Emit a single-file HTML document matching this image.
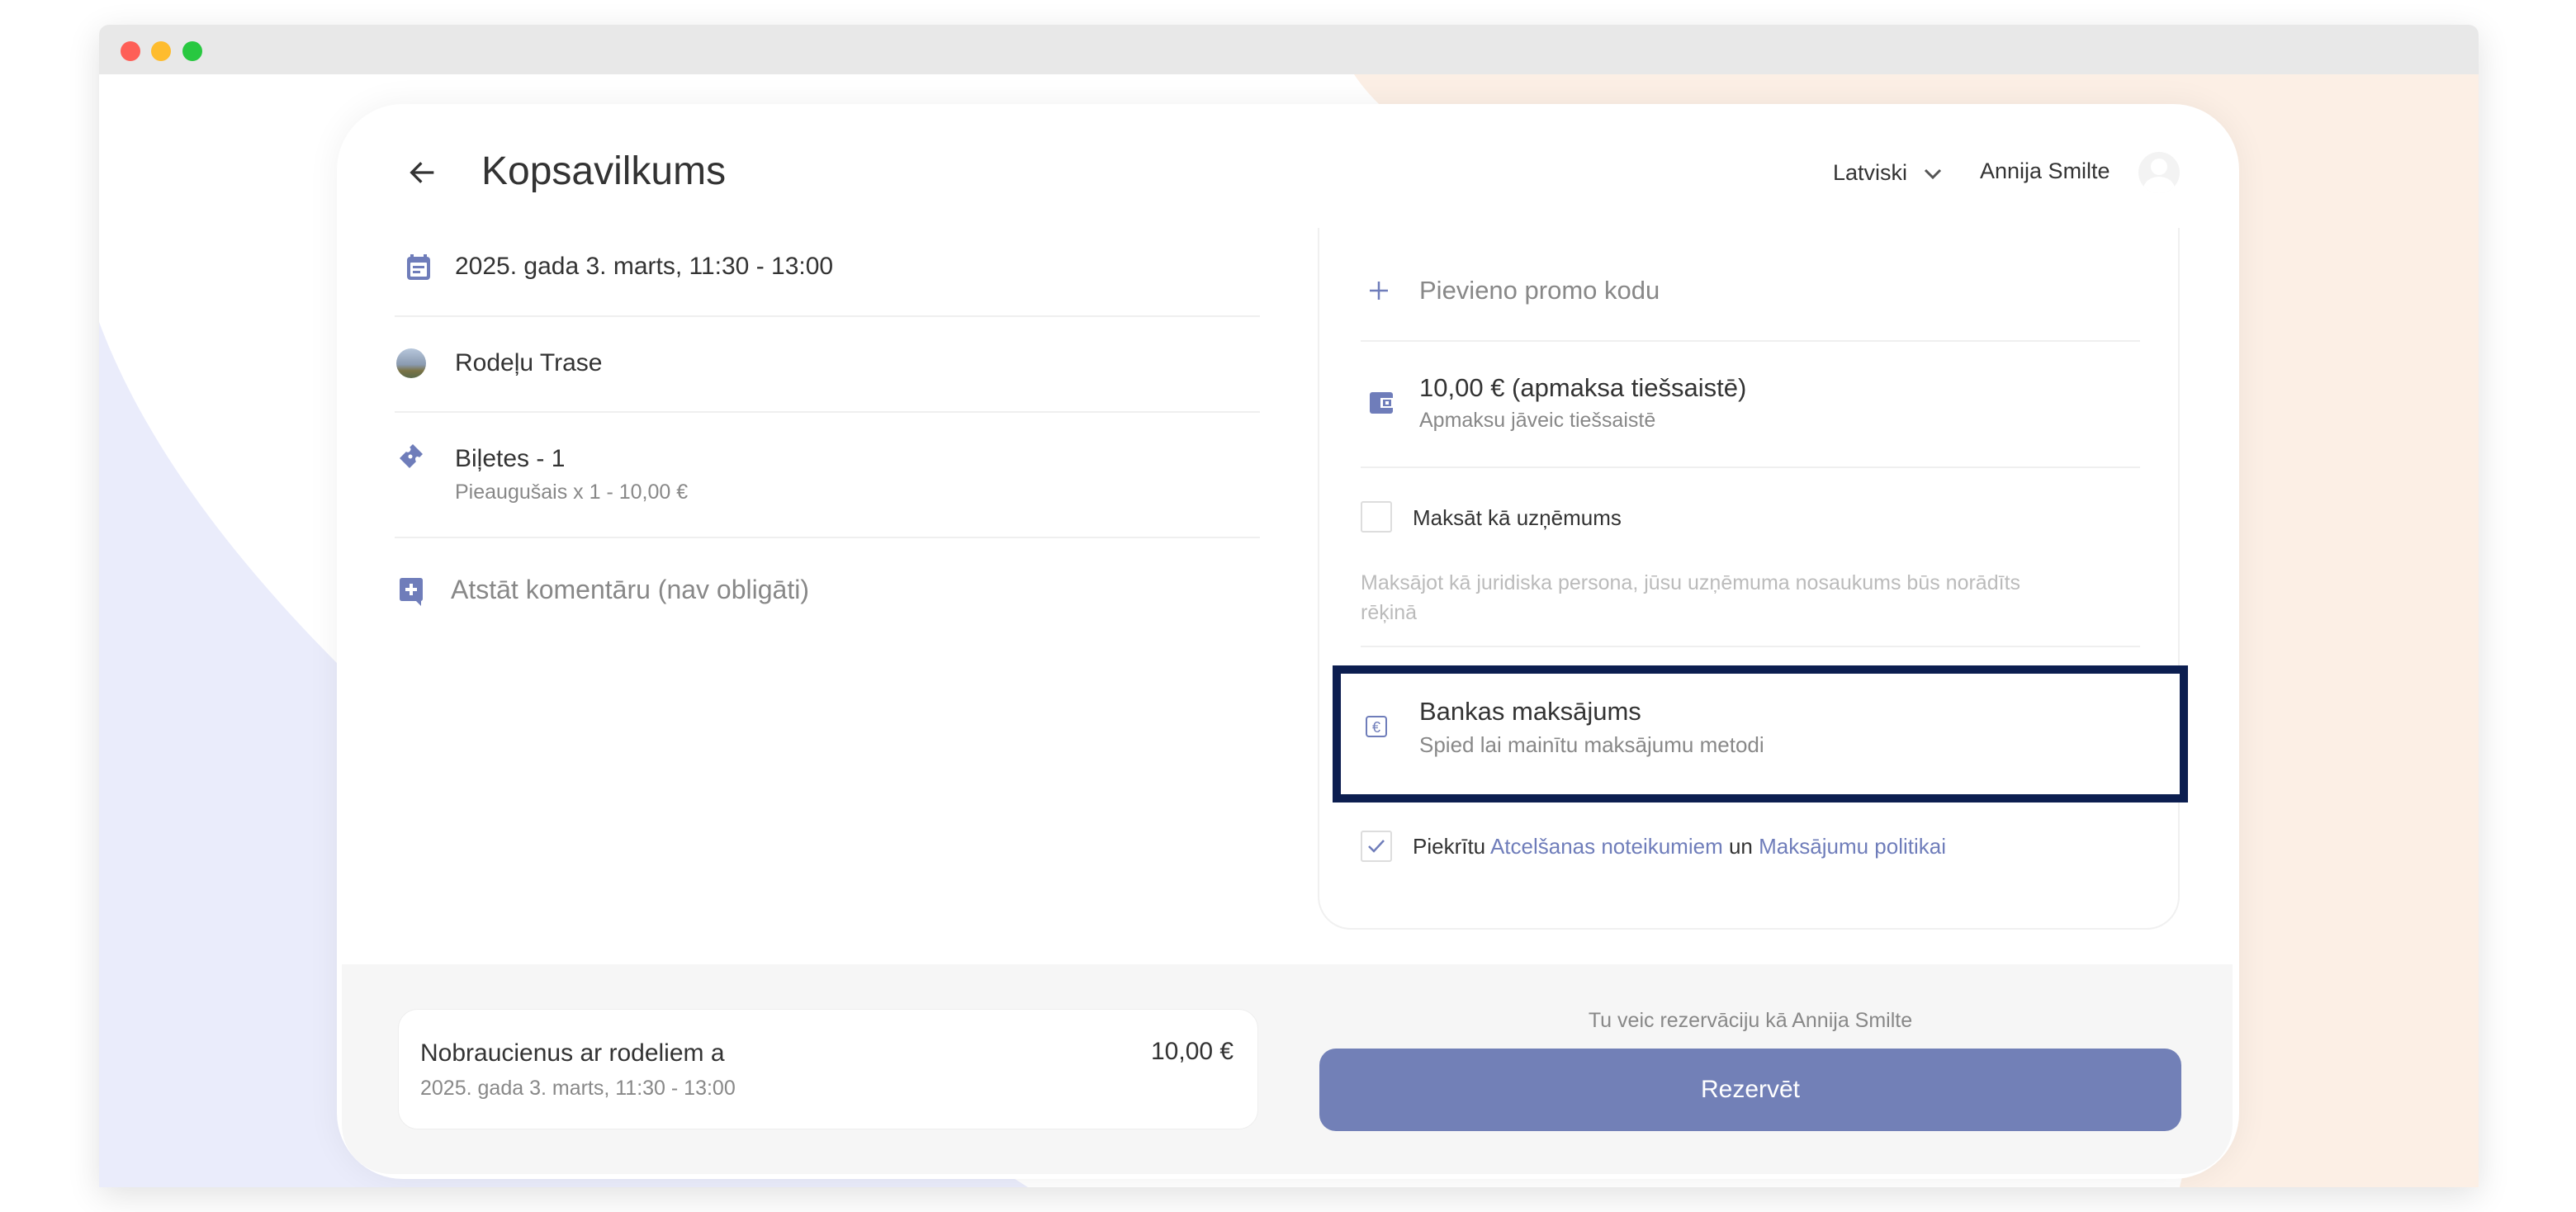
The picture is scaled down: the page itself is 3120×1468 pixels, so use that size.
<!DOCTYPE html>
<html><head><meta charset="utf-8"><style>
*{margin:0;padding:0;box-sizing:border-box}
body{width:3120px;height:1468px;background:#fff;font-family:"Liberation Sans",sans-serif;position:relative;overflow:hidden;color:#333}
.win{position:absolute;left:120px;top:30px;width:2882px;height:1408px;background:#fff;border-radius:12px 12px 0 0;box-shadow:0 10px 40px rgba(0,0,0,.12);overflow:hidden}
.tb{position:absolute;left:0;top:0;width:100%;height:60px;background:#e8e8e8}
.dot{position:absolute;top:20px;width:24px;height:24px;border-radius:50%}
.abs{position:absolute}
.card{position:absolute;left:288px;top:96px;width:2304px;height:1302px;background:#fff;border-radius:80px;box-shadow:0 0 40px rgba(0,0,0,.06);overflow:hidden}
.t{position:absolute;white-space:nowrap}
.div{position:absolute;height:2px;background:#efefef}
.ic{fill:#6f7dba}
a{color:#6f7dba;text-decoration:none}
</style></head><body>
<div class="win">
<svg class="abs" style="left:0;top:60px" width="2882" height="1348">
<path d="M0,300 C120,620 500,950 1125,1348 L0,1348 Z" fill="#eaecfb"/>
<path d="M1520,0 L2882,0 L2882,1348 L2520,1348 C2620,950 2320,560 1880,240 C1700,120 1580,90 1520,0 Z" fill="#fcefe5"/>
</svg>
<div class="tb"><div class="dot" style="left:26px;background:#fe5f57"></div><div class="dot" style="left:63px;background:#febc2e"></div><div class="dot" style="left:101px;background:#28c840"></div></div>
<div class="card">
<!-- header -->
<svg class="abs" style="left:84px;top:63px" width="40" height="40" viewBox="0 0 24 24"><path d="M20 12H5M11 5l-7 7 7 7" stroke="#333" stroke-width="2" fill="none"/></svg>
<div class="t" style="left:175px;top:54px;font-size:48px;color:#333">Kopsavilkums</div>
<div class="t" style="left:1812px;top:68px;font-size:27px">Latviski</div>
<svg class="abs" style="left:1920px;top:74px" width="26" height="20" viewBox="0 0 26 20"><path d="M4 6l9 9 9-9" stroke="#555" stroke-width="3" fill="none"/></svg>
<div class="t" style="left:1990px;top:66px;font-size:27px">Annija Smilte</div>
<div class="abs" style="left:2182px;top:58px;width:50px;height:50px;border-radius:50%;background:#f3f3f3;overflow:hidden"><div class="abs" style="left:15px;top:8px;width:20px;height:20px;border-radius:50%;background:#fff"></div><div class="abs" style="left:6px;top:30px;width:38px;height:30px;border-radius:50%;background:#fff"></div></div>
<!-- left column -->
<svg class="abs" style="left:84px;top:182px" width="30" height="32" viewBox="0 0 30 32"><rect x="1" y="3" width="28" height="28" rx="4" class="ic"/><rect x="5" y="0" width="4" height="6" class="ic"/><rect x="21" y="0" width="4" height="6" class="ic"/><rect x="5" y="10" width="20" height="17" fill="#fff" rx="1"/><rect x="8" y="14" width="14" height="3" class="ic"/><rect x="8" y="20" width="9" height="3" class="ic"/></svg>
<div class="t" style="left:143px;top:180px;font-size:30px">2025. gada 3. marts, 11:30 - 13:00</div>
<div class="div" style="left:70px;top:256px;width:1048px"></div>
<div class="abs" style="left:72px;top:296px;width:36px;height:36px;border-radius:50%;background:linear-gradient(#b7c7dc 0,#8a9ab0 55%,#7a7345 75%,#5a6a4a 100%)"></div>
<div class="t" style="left:143px;top:297px;font-size:30px">Rodeļu Trase</div>
<div class="div" style="left:70px;top:372px;width:1048px"></div>
<svg class="abs" style="left:74px;top:410px" width="32" height="32" viewBox="0 0 32 32"><path d="M18 2 L30 14 L26 18 C24 16 21 17 21 20 C21 22 22 23 22 23 L14 31 L2 19 L10 11 C11 12 13 12 14 11 C16 9 16 7 14 6 Z" class="ic"/><circle cx="15" cy="17" r="2.5" fill="#fff"/></svg>
<div class="t" style="left:143px;top:413px;font-size:30px;color:#333">Biļetes - 1</div>
<div class="t" style="left:143px;top:456px;font-size:25px;color:#888">Pieaugušais x 1 - 10,00 €</div>
<div class="div" style="left:70px;top:524px;width:1048px"></div>
<svg class="abs" style="left:74px;top:573px" width="32" height="36" viewBox="0 0 32 36"><path d="M2 4 Q2 1 5 1 H27 Q30 1 30 4 V26 Q30 29 27 29 H28 V35 L22 29 H5 Q2 29 2 26 Z" class="ic"/><rect x="14" y="8" width="4" height="14" fill="#fff"/><rect x="9" y="13" width="14" height="4" fill="#fff"/></svg>
<div class="t" style="left:138px;top:570px;font-size:32px;color:#888">Atstāt komentāru (nav obligāti)</div>
<!-- right panel -->
<div class="abs" style="left:1188px;top:150px;width:1044px;height:850px;border:2px solid #f0f0f0;border-top:none;border-radius:0 0 40px 40px"></div>
<svg class="abs" style="left:1248px;top:212px" width="28" height="28" viewBox="0 0 28 28"><path d="M14 3V25M3 14H25" stroke="#6f7dba" stroke-width="2.5"/></svg>
<div class="t" style="left:1311px;top:208px;font-size:31px;color:#888">Pievieno promo kodu</div>
<div class="div" style="left:1240px;top:286px;width:944px"></div>
<svg class="abs" style="left:1250px;top:347px" width="30" height="30" viewBox="0 0 30 30"><rect x="1" y="2" width="28" height="26" rx="3" class="ic"/><rect x="14" y="9" width="15" height="12" fill="#fff"/><rect x="17" y="11" width="10" height="8" class="ic"/><rect x="20" y="13" width="4" height="4" fill="#fff"/></svg>
<div class="t" style="left:1311px;top:326px;font-size:31px;color:#333">10,00 € (apmaksa tiešsaistē)</div>
<div class="t" style="left:1311px;top:369px;font-size:25px;color:#888">Apmaksu jāveic tiešsaistē</div>
<div class="div" style="left:1240px;top:439px;width:944px"></div>
<div class="abs" style="left:1240px;top:481px;width:38px;height:38px;border:2px solid #ddd;border-radius:3px;background:#fff"></div>
<div class="t" style="left:1303px;top:486px;font-size:26px;color:#333">Maksāt kā uzņēmums</div>
<div class="t" style="left:1240px;top:562px;font-size:25px;color:#bbb;line-height:36px">Maksājot kā juridiska persona, jūsu uzņēmuma nosaukums būs norādīts<br>rēķinā</div>
<div class="div" style="left:1240px;top:656px;width:944px"></div>
<div class="abs" style="left:1206px;top:680px;width:1036px;height:166px;border:10px solid #0c1e50;background:#fff"></div>
<svg class="abs" style="left:1245px;top:740px" width="28" height="28" viewBox="0 0 28 28"><rect x="2" y="2" width="24" height="24" rx="3" fill="none" stroke="#6f7dba" stroke-width="2"/><text x="14" y="21" text-anchor="middle" font-size="18" fill="#6f7dba" font-family="Liberation Sans">€</text></svg>
<div class="t" style="left:1311px;top:718px;font-size:31px;color:#333">Bankas maksājums</div>
<div class="t" style="left:1311px;top:761px;font-size:26px;color:#888">Spied lai mainītu maksājumu metodi</div>
<div class="abs" style="left:1240px;top:880px;width:38px;height:38px;border:2px solid #ddd;border-radius:3px;background:#fff"></div>
<svg class="abs" style="left:1246px;top:886px" width="26" height="26" viewBox="0 0 26 26"><path d="M4 13l6 6 12-13" stroke="#6f7dba" stroke-width="2.5" fill="none"/></svg>
<div class="t" style="left:1303px;top:884px;font-size:26px;color:#333">Piekrītu <a>Atcelšanas noteikumiem</a> un <a>Maksājumu politikai</a></div>
<!-- footer -->
<div class="abs" style="left:6px;top:1042px;width:2290px;height:254px;background:#f6f6f6;border-radius:0 0 60px 60px"></div>
<div class="abs" style="left:74px;top:1096px;width:1042px;height:146px;background:#fff;border-radius:24px;border:1px solid #eee"></div>
<div class="t" style="left:101px;top:1133px;font-size:30px;color:#333">Nobraucienus ar rodeliem a</div>
<div class="t" style="left:986px;top:1131px;font-size:30px;color:#333">10,00 €</div>
<div class="t" style="left:101px;top:1178px;font-size:25px;color:#888">2025. gada 3. marts, 11:30 - 13:00</div>
<div class="t" style="left:1190px;top:1096px;width:1044px;text-align:center;font-size:25px;color:#888">Tu veic rezervāciju kā Annija Smilte</div>
<div class="abs" style="left:1190px;top:1144px;width:1044px;height:100px;background:#7280b7;border-radius:20px;color:#fff;font-size:30px;text-align:center;line-height:100px">Rezervēt</div>
</div>
</div>
</body></html>
